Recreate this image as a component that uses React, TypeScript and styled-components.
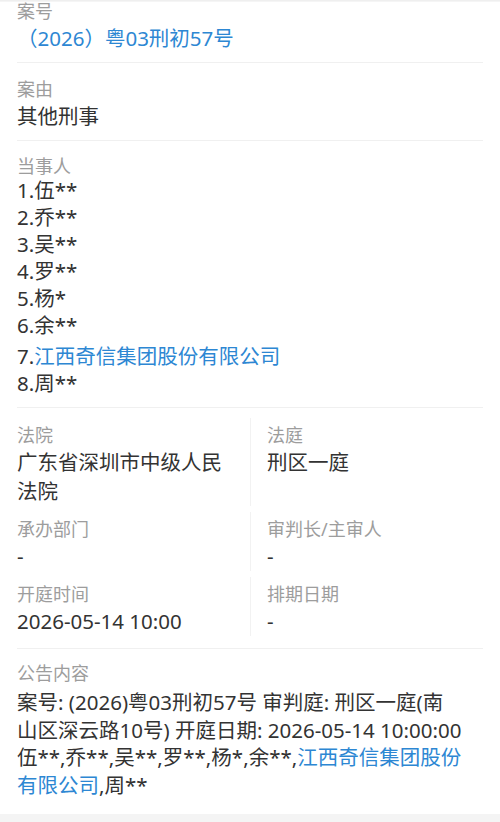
import React from "react";
import styled, { createGlobalStyle } from "styled-components";

const FONT = `"Noto Sans", "Noto Sans CJK SC", sans-serif`;

const Global = createGlobalStyle`
  html, body { margin: 0; padding: 0; background: #ffffff; }
  body {
    font-family: ${FONT};
    -webkit-font-smoothing: antialiased;
  }
`;

const HeaderEdge = styled.div`
  position: fixed;
  top: 0;
  left: 0;
  right: 0;
  height: 2px;
  background: linear-gradient(#ececec, #f8f8f8);
  z-index: 2;
`;

const Page = styled.div`
  margin-top: -15px;
  background: #ffffff;
  padding: 0 17px;
`;

const Section = styled.section<{ $pad?: string; $last?: boolean }>`
  padding: ${(p) => p.$pad ?? "13px 0 10px"};
  border-bottom: ${(p) => (p.$last ? "none" : "1px solid #f0f0f0")};
`;

const Label = styled.div<{ $lh?: number }>`
  font-family: ${FONT};
  font-size: 18px;
  line-height: ${(p) => p.$lh ?? 26}px;
  color: #9d9d9d;
`;

const Value = styled.div<{ $lh?: number }>`
  font-family: ${FONT};
  font-size: 20.5px;
  line-height: ${(p) => p.$lh ?? 28}px;
  color: #333333;
  word-break: break-all;
`;

const Link = styled.span`
  color: #2d87d3;
`;

const PartyList = styled.ol`
  list-style: none;
  margin: 0;
  padding: 0;
`;

const Party = styled.li<{ $gap?: number }>`
  font-size: 20.5px;
  line-height: 27px;
  color: #333333;
  padding-top: ${(p) => p.$gap ?? 0}px;
`;

const GridSection = styled.section`
  display: grid;
  grid-template-columns: 1fr 1fr;
  row-gap: 6px;
  padding: 10px 0 12px;
  border-bottom: 1px solid #f0f0f0;
`;

const Cell = styled.div<{ $right?: boolean }>`
  padding-top: 4px;
  padding-left: ${(p) => (p.$right ? "16px" : "0")};
  padding-right: ${(p) => (p.$right ? "0" : "16px")};
  border-left: ${(p) => (p.$right ? "1px solid #f2f2f2" : "none")};
  min-width: 0;
`;

const Notice = styled.div`
  margin-top: 3px;
  padding-right: 14px;
  font-size: 20.5px;
  line-height: 27.5px;
  color: #333333;
  word-break: break-all;
`;

const FooterBand = styled.div`
  height: 40px;
  background: #f4f4f4;
`;

const parties: { text: string; link?: boolean }[] = [
  { text: "伍**" },
  { text: "乔**" },
  { text: "吴**" },
  { text: "罗**" },
  { text: "杨*" },
  { text: "余**" },
  { text: "江西奇信集团股份有限公司", link: true },
  { text: "周**" },
];

const grid: [string, string][] = [
  ["法院", "广东省深圳市中级人民法院"],
  ["法庭", "刑区一庭"],
  ["承办部门", "-"],
  ["审判长/主审人", "-"],
  ["开庭时间", "2026-05-14 10:00"],
  ["排期日期", "-"],
];

export default function App() {
  return (
    <>
      <Global />
      <HeaderEdge />
      <Page>
        <Section>
          <Label>案号</Label>
          <Value>
            <Link>（2026）粤03刑初57号</Link>
          </Value>
        </Section>
        <Section>
          <Label>案由</Label>
          <Value>其他刑事</Value>
        </Section>
        <Section $pad="14px 0 10px">
          <Label $lh={22}>当事人</Label>
          <PartyList>
            {parties.map((p, i) => (
              <Party key={i} $gap={p.link ? 4 : 0}>
                {i + 1}.{p.link ? <Link>{p.text}</Link> : p.text}
              </Party>
            ))}
          </PartyList>
        </Section>
        <GridSection>
          {grid.map(([k, v], i) => (
            <Cell key={k} $right={i % 2 === 1}>
              <Label>{k}</Label>
              <Value $lh={29}>{v}</Value>
            </Cell>
          ))}
        </GridSection>
        <Section $pad="11px 0 15px" $last>
          <Label>公告内容</Label>
          <Notice>
            案号: (2026)粤03刑初57号 审判庭: 刑区一庭(南
            <br />
            山区深云路10号) 开庭日期: 2026-05-14 10:00:00
            <br />
            伍**,乔**,吴**,罗**,杨*,余**,<Link>江西奇信集团股份
              <br />
              有限公司</Link>,周**
          </Notice>
        </Section>
      </Page>
      <FooterBand />
    </>
  );
}
